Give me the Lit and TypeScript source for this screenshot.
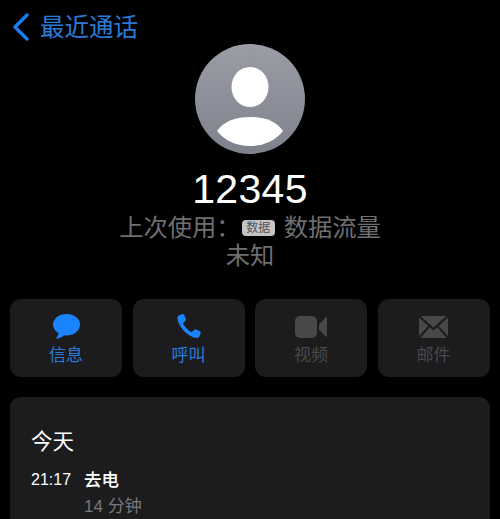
import { LitElement, html, css, svg } from "lit";
import { customElement } from "lit/decorators.js";

const msg = svg`<svg class="ic" width="29" height="27" viewBox="0 0 30 28"><path fill="#1a84ff" d="M15 1C7.200 1 1 5.900 1 12c0 3.700 2.300 7 5.900 9-.3 1.800-1.300 3.500-2.300 4.600-.4.500 0 1.100.6 1 2.800-.4 5.500-1.600 7.300-3.400 .8.100 1.600.2 2.500.2 7.800 0 14-4.900 14-11.400S22.800 1 15 1z"/></svg>`;
const phone = svg`<svg class="ic" width="26" height="26" viewBox="0 0 26 26"><path fill="#1a84ff" d="M3.200 1.300 6 .2c1-.4 1.900 0 2.300 1l1.500 3.600c.3.800.1 1.500-.5 2.100L7.500 8.600c-.4.400-.5.900-.2 1.400 1.500 2.900 4.800 6.300 7.700 7.900.5.300 1 .2 1.400-.2l1.800-1.800c.6-.6 1.400-.7 2.100-.4l3.300 1.500c1 .4 1.400 1.400 1 2.300l-1 2.600c-.5 1.200-1.500 1.900-2.800 1.900-3.800 0-8.600-2.800-12.200-6.400C4.900 13.700 1.800 8.300 1.500 4.400c-.1-1.400.5-2.500 1.700-3.100z"/></svg>`;
const video = svg`<svg class="ic" width="32" height="22" viewBox="0 0 32 22"><rect x="0" y="0" width="22" height="22" rx="5" fill="#48484a"/><path fill="#48484a" d="M24 8.500 30.500 1.500c.5-.5 1.500-.2 1.500.6v17.800c0 .8-1 1.100-1.500.6L24 13.500z"/></svg>`;
const mail = svg`<svg class="ic" width="29" height="22" viewBox="0 0 29 22"><path fill="#48484a" d="M1.500 0h26L14.500 11.500zM0 1.500 9.300 10 0 20zM29 1.500 19.700 10 29 20zM1.500 22 10.700 11.300 14.500 14.500 18.300 11.300 27.500 22z"/></svg>`;

@customElement("app-root")
export class AppRoot extends LitElement {
  static styles = css`
    :host { display: block; width: 500px; height: 519px; overflow: hidden; background: #000; color: #fff;
      font-family: "Liberation Sans", "Noto Sans CJK SC", sans-serif; }
    .nav { display: flex; align-items: center; gap: 11px; height: 54px; padding-left: 12px; color: #2a7bd8; font-size: 24.500px; }
    .nav span { line-height: 54px; position: relative; top: 1px; }
    .avatar { display: block; margin: -10px auto 0; width: 110px; height: 110px; }
    .head { display: flex; flex-direction: column; align-items: center; }
    .num { font-size: 41px; line-height: 48px; margin-top: 11px; letter-spacing: .3px; }
    .sub { display: flex; align-items: center; color: #6f6f72; font-size: 24.300px; line-height: 28px; }
    .sub.first { margin-top: 1px; }
    .tag { display: inline-block; background: #c4c4c6; color: #555; font-size: 12px; line-height: 16px; padding: 0 4.500px; border-radius: 4px; margin: 0 9px 0 1px; }
    .row { display: grid; grid-template-columns: repeat(4, 112px); gap: 10.500px; margin: 29px 10px 0; }
    .btn { height: 78px; border-radius: 11px; background: #1c1c1e; display: flex; flex-direction: column; align-items: center; color: #2a7bd8; font-size: 17px; line-height: 24px; }
    .btn.off { color: #48484a; }
    .slot { height: 45px; padding-bottom: 4px; display: flex; align-items: flex-end; box-sizing: border-box; }
    .off .slot { padding-bottom: 6px; }
    .card { margin: 20px 10px 0; background: #1c1c1e; border-radius: 11px 11px 0 0; padding: 31px 21px 0; height: 200px; box-sizing: border-box; }
    .day { font-size: 21.500px; line-height: 28px; }
    .call { display: grid; grid-template-columns: 53px 1fr; margin-top: 11px; }
    .t { font-size: 16px; line-height: 26px; }
    .k { font-size: 17.500px; line-height: 26px; font-weight: 500; }
    .d { grid-column: 2; font-size: 17px; line-height: 28px; color: #78787b; }
  `;

  render() {
    return html`
      <div class="nav">
        <svg width="17" height="28" viewBox="0 0 17 28"><path d="M15 2 3 14l12 12" fill="none" stroke="#1a7cf0" stroke-width="3.400" stroke-linecap="round" stroke-linejoin="round"/></svg>
        <span>最近通话</span>
      </div>
      <div class="head">
        <svg class="avatar" viewBox="0 0 110 110">
          <defs>
            <linearGradient id="g" x1="0" y1="0" x2="0" y2="1"><stop offset="0" stop-color="#9a9ca6"/><stop offset="1" stop-color="#7f828c"/></linearGradient>
          </defs>
          <circle cx="55" cy="55" r="55" fill="url(#g)"/>
          <ellipse cx="55" cy="43" rx="18.500" ry="20" fill="#fff"/>
          <path d="M22 87C29 77 41 73 55 73s26 4 33 14c-8 10-20 15-33 15S30 97 22 87z" fill="#fff"/>
        </svg>
        <div class="num">12345</div>
        <div class="sub first"><span>上次使用：</span><span class="tag">数据</span><span>数据流量</span></div>
        <div class="sub">未知</div>
      </div>
      <div class="row">
        <div class="btn"><div class="slot">${msg}</div>信息</div>
        <div class="btn"><div class="slot">${phone}</div>呼叫</div>
        <div class="btn off"><div class="slot">${video}</div>视频</div>
        <div class="btn off"><div class="slot">${mail}</div>邮件</div>
      </div>
      <div class="card">
        <div class="day">今天</div>
        <div class="call">
          <div class="t">21:17</div><div class="k">去电</div>
          <div class="d">14 分钟</div>
        </div>
      </div>
    `;
  }
}
